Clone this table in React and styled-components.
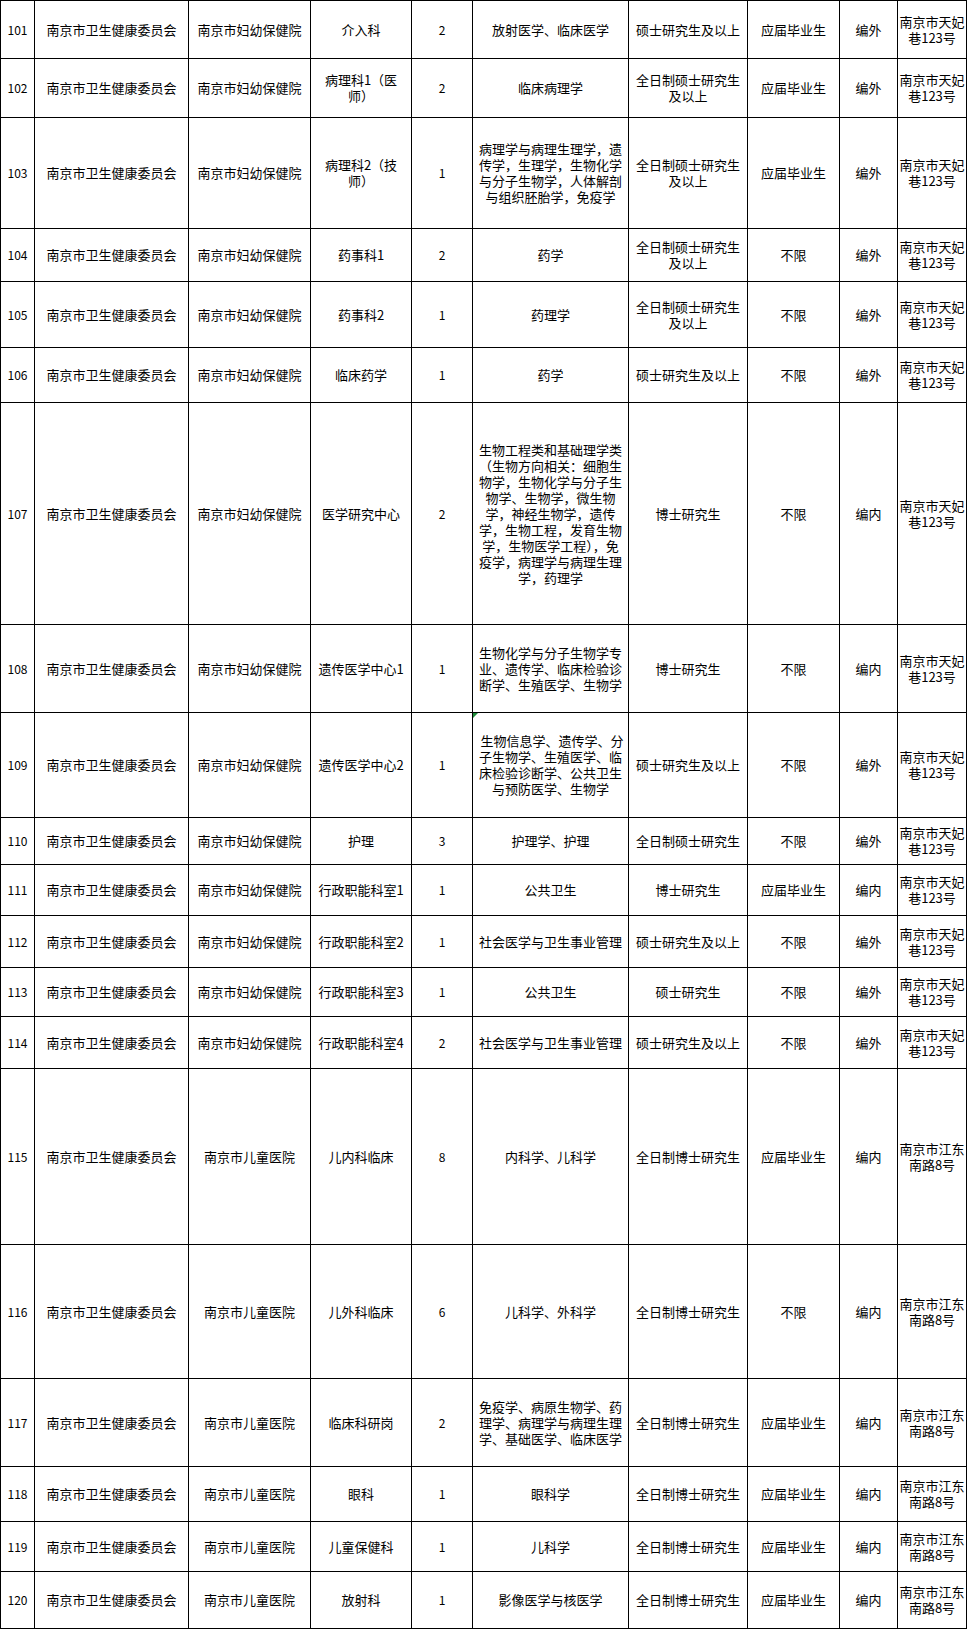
import React from "react";
import styled, { createGlobalStyle } from "styled-components";

const GlobalStyle = createGlobalStyle`
  html, body {
    margin: 0;
    padding: 0;
    background: #ffffff;
  }
  body {
    font-family: "Noto Sans CJK SC", "Noto Sans", sans-serif;
    color: #000;
  }
`;

const COLS = [34, 154, 122, 101, 61, 156, 119, 92, 58, 69];

const Sheet = styled.table`
  border-collapse: collapse;
  table-layout: fixed;
  width: 967px;
  font-family: "Noto Sans CJK SC", "Noto Sans", sans-serif;
  font-size: 13px;
  line-height: 16px;
  color: #000;
`;

const Row = styled.tr`
  height: ${(p) => p.$h}px;
`;

const Cell = styled.td`
  position: relative;
  border: 1px solid #000;
  padding: 0;
  text-align: center;
  vertical-align: middle;
  white-space: nowrap;
  overflow: hidden;
  font-size: ${(p) => (p.$num ? "12px" : "13px")};
`;

const Marker = styled.span`
  position: absolute;
  left: 0;
  top: 0;
  width: 0;
  height: 0;
  border-top: 5px solid #1e8c3a;
  border-right: 5px solid transparent;
`;

const Line = styled.span`
  display: block;
`;

const TIANFEI = ["南京市天妃", "巷123号"];
const JIANGDONG = ["南京市江东", "南路8号"];
const ORG = "南京市卫生健康委员会";
const FY = "南京市妇幼保健院";
const ET = "南京市儿童医院";

const rows = [
  { h: 58, id: "101", unit: FY, post: ["介入科"], n: "2", major: ["放射医学、临床医学"], edu: ["硕士研究生及以上"], cond: "应届毕业生", kind: "编外", addr: TIANFEI },
  { h: 59, id: "102", unit: FY, post: ["病理科1（医", "师）"], n: "2", major: ["临床病理学"], edu: ["全日制硕士研究生", "及以上"], cond: "应届毕业生", kind: "编外", addr: TIANFEI },
  { h: 111, id: "103", unit: FY, post: ["病理科2（技", "师）"], n: "1", major: ["病理学与病理生理学，遗", "传学，生理学，生物化学", "与分子生物学，人体解剖", "与组织胚胎学，免疫学"], edu: ["全日制硕士研究生", "及以上"], cond: "应届毕业生", kind: "编外", addr: TIANFEI },
  { h: 53, id: "104", unit: FY, post: ["药事科1"], n: "2", major: ["药学"], edu: ["全日制硕士研究生", "及以上"], cond: "不限", kind: "编外", addr: TIANFEI },
  { h: 66, id: "105", unit: FY, post: ["药事科2"], n: "1", major: ["药理学"], edu: ["全日制硕士研究生", "及以上"], cond: "不限", kind: "编外", addr: TIANFEI },
  { h: 55, id: "106", unit: FY, post: ["临床药学"], n: "1", major: ["药学"], edu: ["硕士研究生及以上"], cond: "不限", kind: "编外", addr: TIANFEI },
  { h: 222, id: "107", unit: FY, post: ["医学研究中心"], n: "2", major: ["生物工程类和基础理学类", "（生物方向相关：细胞生", "物学，生物化学与分子生", "物学、生物学，微生物", "学，神经生物学，遗传", "学，生物工程，发育生物", "学，生物医学工程），免", "疫学，病理学与病理生理", "学，药理学"], edu: ["博士研究生"], cond: "不限", kind: "编内", addr: TIANFEI },
  { h: 88, id: "108", unit: FY, post: ["遗传医学中心1"], n: "1", major: ["生物化学与分子生物学专", "业、遗传学、临床检验诊", "断学、生殖医学、生物学"], edu: ["博士研究生"], cond: "不限", kind: "编内", addr: TIANFEI },
  { h: 105, id: "109", unit: FY, post: ["遗传医学中心2"], n: "1", major: ["\u00a0生物信息学、遗传学、分", "子生物学、生殖医学、临", "床检验诊断学、公共卫生", "与预防医学、生物学"], mark: true, edu: ["硕士研究生及以上"], cond: "不限", kind: "编外", addr: TIANFEI },
  { h: 47, id: "110", unit: FY, post: ["护理"], n: "3", major: ["护理学、护理"], edu: ["全日制硕士研究生"], cond: "不限", kind: "编外", addr: TIANFEI },
  { h: 51, id: "111", unit: FY, post: ["行政职能科室1"], n: "1", major: ["公共卫生"], edu: ["博士研究生"], cond: "应届毕业生", kind: "编内", addr: TIANFEI },
  { h: 52, id: "112", unit: FY, post: ["行政职能科室2"], n: "1", major: ["社会医学与卫生事业管理"], edu: ["硕士研究生及以上"], cond: "不限", kind: "编外", addr: TIANFEI },
  { h: 49, id: "113", unit: FY, post: ["行政职能科室3"], n: "1", major: ["公共卫生"], edu: ["硕士研究生"], cond: "不限", kind: "编外", addr: TIANFEI },
  { h: 52, id: "114", unit: FY, post: ["行政职能科室4"], n: "2", major: ["社会医学与卫生事业管理"], edu: ["硕士研究生及以上"], cond: "不限", kind: "编外", addr: TIANFEI },
  { h: 176, id: "115", unit: ET, post: ["儿内科临床"], n: "8", major: ["内科学、儿科学"], edu: ["全日制博士研究生"], cond: "应届毕业生", kind: "编内", addr: JIANGDONG },
  { h: 134, id: "116", unit: ET, post: ["儿外科临床"], n: "6", major: ["儿科学、外科学"], edu: ["全日制博士研究生"], cond: "不限", kind: "编内", addr: JIANGDONG },
  { h: 88, id: "117", unit: ET, post: ["临床科研岗"], n: "2", major: ["免疫学、病原生物学、药", "理学、病理学与病理生理", "学、基础医学、临床医学"], edu: ["全日制博士研究生"], cond: "应届毕业生", kind: "编内", addr: JIANGDONG },
  { h: 55, id: "118", unit: ET, post: ["眼科"], n: "1", major: ["眼科学"], edu: ["全日制博士研究生"], cond: "应届毕业生", kind: "编内", addr: JIANGDONG },
  { h: 50, id: "119", unit: ET, post: ["儿童保健科"], n: "1", major: ["儿科学"], edu: ["全日制博士研究生"], cond: "应届毕业生", kind: "编内", addr: JIANGDONG },
  { h: 57, id: "120", unit: ET, post: ["放射科"], n: "1", major: ["影像医学与核医学"], edu: ["全日制博士研究生"], cond: "应届毕业生", kind: "编内", addr: JIANGDONG },
];

function Lines({ items }) {
  return items.map((t, i) => <Line key={i}>{t}</Line>);
}

export default function App() {
  return (
    <>
      <GlobalStyle />
      <Sheet>
        <colgroup>
          {COLS.map((w, i) => (
            <col key={i} style={{ width: w }} />
          ))}
        </colgroup>
        <tbody>
          {rows.map((r) => (
            <Row key={r.id} $h={r.h}>
              <Cell $num>{r.id}</Cell>
              <Cell>{ORG}</Cell>
              <Cell>{r.unit}</Cell>
              <Cell>
                <Lines items={r.post} />
              </Cell>
              <Cell $num>{r.n}</Cell>
              <Cell>
                {r.mark && <Marker />}
                <Lines items={r.major} />
              </Cell>
              <Cell>
                <Lines items={r.edu} />
              </Cell>
              <Cell>{r.cond}</Cell>
              <Cell>{r.kind}</Cell>
              <Cell>
                <Lines items={r.addr} />
              </Cell>
            </Row>
          ))}
        </tbody>
      </Sheet>
    </>
  );
}
